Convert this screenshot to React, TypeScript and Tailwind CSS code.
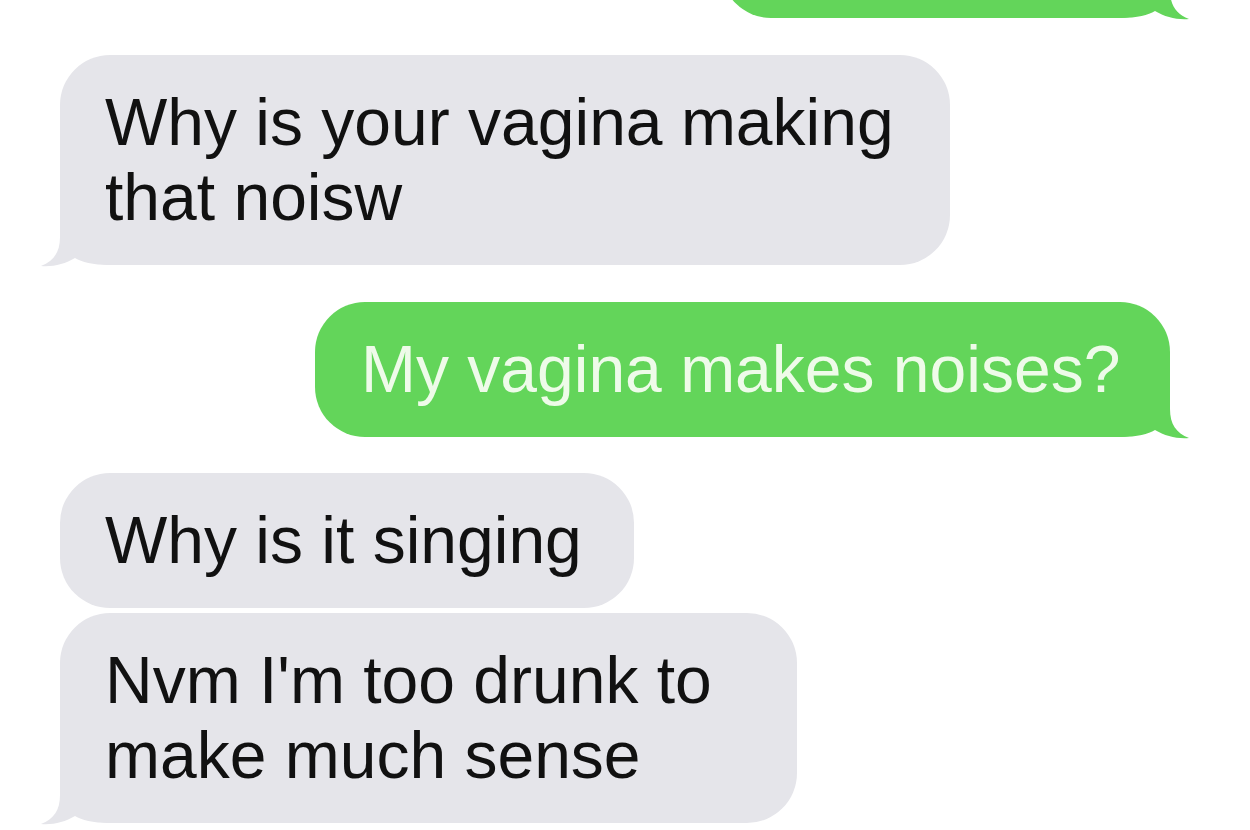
import React from 'react';

type Side = 'left' | 'right';

// iMessage-style tail, drawn over the bubble's bottom corner
const Tail: React.FC<{ side: Side; color: string }> = ({ side, color }) => (
  <svg
    width="70"
    height="52"
    viewBox="0 0 70 52"
    className={`absolute bottom-[-2px] ${side === 'right' ? 'right-[-20px]' : 'left-[-20px] -scale-x-100'}`}
  >
    <path
      d="M0 0 L50 0 L50 22 C50 37 56 46 69 51 C57 52 45 49 35 43 C28 47 18 50 0 50 Z"
      fill={color}
    />
  </svg>
);

const Bubble: React.FC<{
  side: Side;
  width: string;
  tail?: boolean;
  className?: string;
  children?: React.ReactNode;
}> = ({ side, width, tail, className = '', children }) => {
  const isMe = side === 'right';
  return (
    <div
      className={`relative rounded-[50px] py-[30px] text-[66px] leading-[75px] whitespace-nowrap ${width} ${
        isMe ? 'self-end bg-[#63d55a] text-[#eefbe9] pl-[46px]' : 'self-start bg-[#e5e5ea] text-[#111111] pl-[45px]'
      } ${className}`}
    >
      {tail && <Tail side={side} color={isMe ? '#63d55a' : '#e5e5ea'} />}
      <span className="relative">{children}</span>
    </div>
  );
};

export default function App() {
  return (
    <div
      className="w-[1250px] h-[830px] overflow-hidden bg-white flex flex-col pl-[60px] pr-[80px]"
      style={{ fontFamily: '"Liberation Sans", Arial, Helvetica, sans-serif' }}
    >
      {/* previous outgoing message, mostly scrolled off */}
      <Bubble side="right" width="w-[449px]" tail className="h-[135px] mt-[-117px]" />

      <Bubble side="left" width="w-[890px]" tail className="mt-[37px]">
        Why is your vagina making
        <br />
        that noisw
      </Bubble>

      <Bubble side="right" width="w-[855px]" tail className="mt-[37px]">
        My vagina makes noises?
      </Bubble>

      <Bubble side="left" width="w-[574px]" className="mt-[36px]">
        Why is it singing
      </Bubble>

      <Bubble side="left" width="w-[737px]" tail className="mt-[5px]">
        Nvm I'm too drunk to
        <br />
        make much sense
      </Bubble>
    </div>
  );
}
